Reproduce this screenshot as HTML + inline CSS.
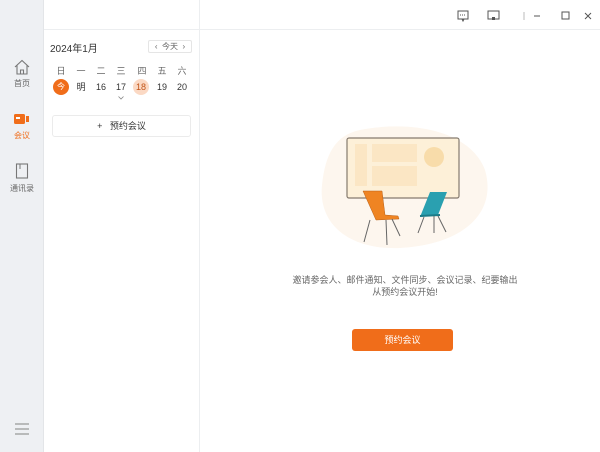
<!DOCTYPE html>
<html><head><meta charset="utf-8"><style>
*{margin:0;padding:0;box-sizing:border-box}
body{width:600px;height:452px;overflow:hidden;background:#fff;font-family:"Liberation Sans","Noto Sans CJK SC",sans-serif;position:relative;color:#333}
.side{position:absolute;left:0;top:0;width:44px;height:452px;background:#eef0f3;border-right:1px solid #e3e5e8}
.nav{position:absolute;left:0;width:44px;text-align:center;font-size:8px;color:#666}
.panel{position:absolute;left:44px;top:0;width:156px;height:452px;border-right:1px solid #eceef0}
.top{position:absolute;left:44px;top:29px;width:556px;height:1px;background:#eceef0}
.abs{position:absolute}
.wk{position:absolute;top:64px;font-size:9px;color:#666;width:20px;text-align:center}
.dy{position:absolute;top:79px;font-size:9px;color:#333;width:20px;text-align:center;line-height:16px}
</style></head><body>
<div class="side">
 <div class="nav" style="top:58px">
  <svg width="18" height="18" viewBox="0 0 18 18"><path d="M2 9 L9 2.5 L16 9 M4 7.5 V16 H14 V7.5 M7.5 16 V12 H10.5 V16" fill="none" stroke="#777" stroke-width="1.1"/></svg>
  <div>首页</div></div>
 <div class="nav" style="top:113px;color:#f06d1a">
  <svg width="18" height="12" viewBox="0 0 18 12"><rect x="1" y="1" width="11" height="10" rx="1.5" fill="#f06d1a"/><rect x="13" y="3" width="3" height="6" fill="#f06d1a"/><rect x="3" y="4" width="4" height="2" fill="#fff"/></svg>
  <div style="margin-top:3px">会议</div></div>
 <div class="nav" style="top:163px">
  <svg width="14" height="16" viewBox="0 0 14 16"><rect x="1.5" y="1" width="11" height="14" fill="none" stroke="#777" stroke-width="1.1"/><path d="M5 1 V6" stroke="#777"/></svg>
  <div style="margin-top:2px">通讯录</div></div>
 <svg class="abs" style="left:15px;top:422px" width="14" height="14" viewBox="0 0 14 14"><path d="M0 2 H14 M0 7 H14 M0 12 H14" stroke="#999" stroke-width="1.2"/></svg>
</div>
<div class="top"></div>
<div class="panel">
 <div class="abs" style="left:6px;top:40px;font-size:10px;color:#333">2024年1月</div>
 <div class="abs" style="left:104px;top:40px;width:44px;height:13px;border:1px solid #e5e5e5;border-radius:2px;font-size:8px;color:#666;line-height:11px;text-align:center">‹&nbsp;&nbsp;今天&nbsp;&nbsp;›</div>
 <div class="wk" style="left:7px">日</div><div class="wk" style="left:27px">一</div><div class="wk" style="left:47px">二</div><div class="wk" style="left:67px">三</div><div class="wk" style="left:88px">四</div><div class="wk" style="left:108px">五</div><div class="wk" style="left:128px">六</div>
 <div class="dy" style="left:9px;width:16px;height:16px;border-radius:8px;background:#f06d1a;color:#fff;font-size:8px">今</div>
 <div class="dy" style="left:27px">明</div><div class="dy" style="left:47px">16</div><div class="dy" style="left:67px">17</div>
 <div class="dy" style="left:89px;width:16px;height:16px;border-radius:8px;background:#fbd9c4;color:#c2551a">18</div>
 <div class="dy" style="left:108px">19</div><div class="dy" style="left:128px">20</div>
 <svg class="abs" style="left:74px;top:96px" width="6" height="4" viewBox="0 0 6 4"><path d="M0.5 0.5 L3 3 L5.5 0.5" fill="none" stroke="#888" stroke-width=".8"/></svg>
 <div class="abs" style="left:8px;top:115px;width:139px;height:22px;border:1px solid #ebebeb;border-radius:3px;font-size:9px;line-height:20px;text-align:center;color:#333">+&nbsp;&nbsp;&nbsp;预约会议</div>
</div>
<svg class="abs" style="left:452px;top:9px" width="140" height="14" viewBox="0 0 140 14">
 <rect x="6" y="2" width="10" height="8" fill="none" stroke="#555"/><path d="M8 6 H14" stroke="#555" stroke-dasharray="1 1"/><path d="M10 10 L11 12 L12 10" fill="none" stroke="#555"/>
 <rect x="36" y="2" width="11" height="8" fill="none" stroke="#555"/><rect x="40" y="8" width="3" height="3" fill="#555"/>
 <path d="M72 3 V11" stroke="#bbb"/><path d="M82 7 H88" stroke="#555"/>
 <rect x="110" y="3" width="7" height="7" fill="none" stroke="#555"/>
 <path d="M133 4 L139 10 M139 4 L133 10" stroke="#555"/>
</svg>
<svg class="abs" style="left:300px;top:120px" width="200" height="140" viewBox="0 0 200 140">
 <path d="M60 10 C110 0 170 10 185 50 C198 95 160 125 100 128 C50 130 18 105 22 65 C25 35 35 15 60 10Z" fill="#fdf6ee"/>
 <rect x="47" y="18" width="112" height="60" rx="2" fill="#fdf0d8" stroke="#857a6e" stroke-width="1.2"/>
 <rect x="55" y="24" width="12" height="42" fill="#fbe6c4"/>
 <rect x="72" y="24" width="45" height="18" fill="#fbe6c4"/><rect x="72" y="46" width="45" height="20" fill="#fbe6c4"/>
 <circle cx="134" cy="37" r="10" fill="#f8dcaa"/>
 <path d="M63 71 L82 71 L85 95 L98 96 L99 99 L76 100 Z" fill="#ef8422" stroke="#b85f16" stroke-width=".5"/>
 <path d="M70 100 L64 122 M86 100 L87 125 M92 99 L100 116" stroke="#666" stroke-width="1"/>
 <path d="M130 72 L147 72 L138 95 L120 97 Z" fill="#2aa0b0"/><path d="M120 96 L140 95" stroke="#1d7b88" stroke-width="2"/>
 <path d="M124 97 L118 113 M134 96 L134 113 M138 96 L146 112" stroke="#666" stroke-width="1"/>
</svg>
<div class="abs" style="left:250px;top:274px;width:310px;text-align:center;font-size:9px;line-height:12px;color:#666">邀请参会人、邮件通知、文件同步、会议记录、纪要输出<br>从预约会议开始!</div>
<div class="abs" style="left:352px;top:329px;width:101px;height:22px;background:#f06d1a;border-radius:3px;color:#fff;font-size:9px;line-height:22px;text-align:center">预约会议</div>
</body></html>
